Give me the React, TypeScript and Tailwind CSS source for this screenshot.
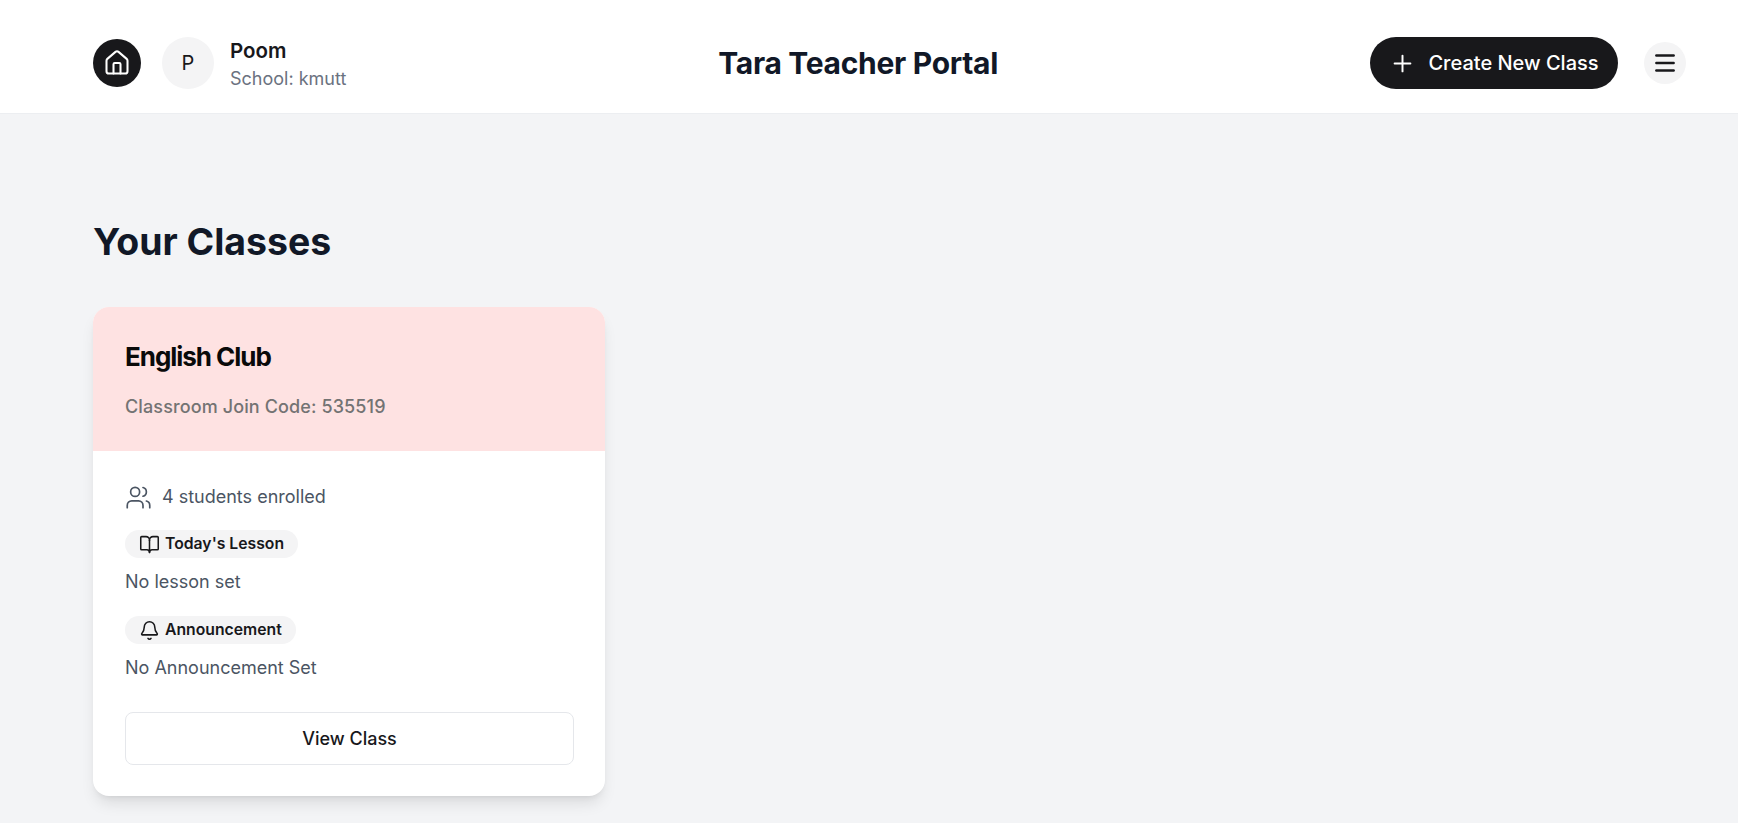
import { Bell, BookOpen, House, Menu, Plus, Users } from "lucide-react";

function Tag({ icon, label }: { icon: React.ReactNode; label: string }) {
  return (
    <div className="flex h-7 w-fit items-center gap-[5px] rounded-full bg-[#f4f4f5] px-3.5 text-[15.75px] font-semibold text-[#18181b]">
      {icon}
      <span>{label}</span>
    </div>
  );
}

export default function App() {
  return (
    <div className="min-h-[823px] overflow-hidden bg-[#f3f4f6] font-['Inter',sans-serif]">
      <header className="flex h-[114px] items-center justify-between border-b border-[#eceef1] bg-white pt-[13px] pl-[93px] pr-[52px]">
        <div className="flex items-center">
          <button className="flex h-12 w-12 items-center justify-center rounded-full bg-[#18181b] text-white">
            <House size={28} strokeWidth={1.75} />
          </button>
          <div className="ml-[21px] flex h-[52px] w-[52px] items-center justify-center rounded-full bg-[#f4f4f5] text-xl text-[#18181b]">
            P
          </div>
          <div className="ml-4 mt-0.5">
            <div className="text-[20.5px] leading-7 font-semibold text-[#18181b]">Poom</div>
            <div className="mt-0.5 text-lg leading-6 text-[#6b7280]">School: kmutt</div>
          </div>
        </div>
        <h1 className="text-[30px] font-bold tracking-[-0.01em] text-[#111827]">Tara Teacher Portal</h1>
        <div className="flex items-center gap-[26px]">
          <button className="flex h-[52px] w-[248px] items-center justify-center gap-3 rounded-full bg-[#18181b] text-xl font-medium text-white">
            <Plus size={27} strokeWidth={1.75} />
            Create New Class
          </button>
          <button className="flex h-[42px] w-[42px] items-center justify-center rounded-full bg-[#f4f4f5] text-[#18181b]">
            <Menu size={26} strokeWidth={2.25} />
          </button>
        </div>
      </header>

      <main className="pl-[93px] pt-[108px]">
        <h2 className="text-[37.4px] leading-10 font-bold text-[#111827]">Your Classes</h2>
        <div className="mt-[45px] w-[512px] overflow-hidden rounded-2xl bg-white shadow-[0_10px_15px_-3px_rgba(0,0,0,0.1),0_4px_6px_-4px_rgba(0,0,0,0.1)]">
          <div className="h-[144px] bg-[#fee2e2] px-8 pt-[34px]">
            <div className="text-[26px] leading-8 font-bold tracking-[-0.04em] text-[#0a0a0a]">English Club</div>
            <div className="mt-5 text-lg leading-7 font-medium tracking-[0.12px] text-[#737373]">Classroom Join Code: 535519</div>
          </div>
          <div className="pl-8 pr-[31px] pt-8 pb-[31px]">
            <div className="flex items-center gap-2.5 text-lg leading-7 text-[#4b5563]">
              <Users size={27} strokeWidth={1.5} />
              4 students enrolled
            </div>
            <div className="mt-[19px]">
              <Tag icon={<BookOpen size={21} strokeWidth={1.75} />} label="Today's Lesson" />
            </div>
            <div className="mt-2.5 text-lg leading-7 text-[#4b5563]">No lesson set</div>
            <div className="mt-5">
              <Tag icon={<Bell size={21} strokeWidth={1.75} />} label="Announcement" />
            </div>
            <div className="mt-2.5 text-lg leading-7 text-[#4b5563]">No Announcement Set</div>
            <button className="mt-[30px] h-[53px] w-full rounded-lg border border-[#e5e7eb] bg-white text-lg font-medium text-[#18181b]">
              View Class
            </button>
          </div>
        </div>
      </main>
    </div>
  );
}
